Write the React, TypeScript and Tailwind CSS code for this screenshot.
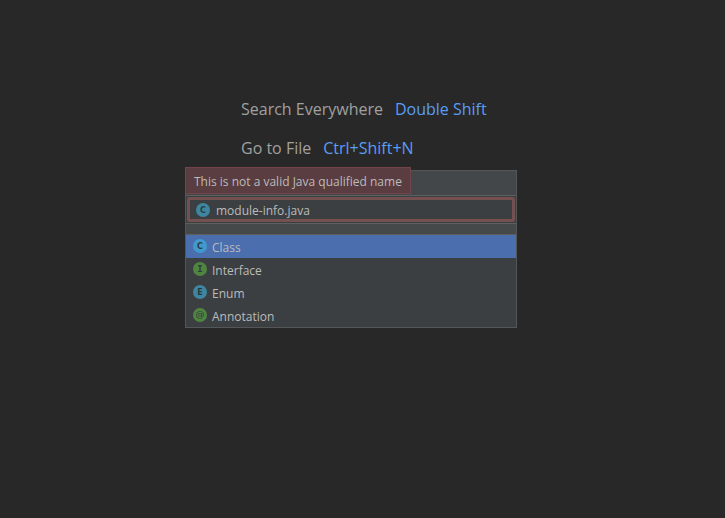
import React, { useState } from 'react';

interface Kind {
  name: string;
  letter: string;
  fill: string;
}

const kinds: Kind[] = [
  { name: 'Class', letter: 'C', fill: '#3e86a0' },
  { name: 'Interface', letter: 'I', fill: '#50853f' },
  { name: 'Enum', letter: 'E', fill: '#3e86a0' },
  { name: 'Annotation', letter: '@', fill: '#50853f' },
];

const tips = [
  { label: 'Search Everywhere', shortcut: 'Double Shift' },
  { label: 'Go to File', shortcut: 'Ctrl+Shift+N' },
];

// "I" needs the mono face for its serifs
const letterStyles: Record<string, string> = {
  C: "font-['DejaVu_Sans',sans-serif] text-[8px] font-bold",
  I: "font-['DejaVu_Sans_Mono',monospace] text-[9px] font-bold",
  E: "font-['DejaVu_Sans',sans-serif] text-[8px] font-bold",
  '@': "font-['DejaVu_Sans',sans-serif] text-[9px]",
};

export default function App() {
  const [fileName, setFileName] = useState('module-info.java');
  const [selected, setSelected] = useState('Class');

  return (
    <main className="min-h-screen bg-[#282828] pt-[90px] pl-[185px] font-['Open_Sans','Noto_Sans',sans-serif]">
      <div className="pl-14">
        {tips.map((tip) => (
          <p key={tip.label} className="flex gap-3 text-[16px] leading-[39px] text-[#a0a0a0]">
            <span>{tip.label}</span>
            <span className="text-[#589df6]">{tip.shortcut}</span>
          </p>
        ))}
      </div>

      {/* New file popup */}
      <form
        className="relative mt-[2px] w-full max-w-[332px] border border-[#555657] bg-[#3c3f41] text-[12px] text-[#bbbbbb]"
        onSubmit={(e) => e.preventDefault()}
      >
        <div className="h-6 bg-[#434749]" />
        <div
          id="name-error"
          role="alert"
          className="absolute -top-1 -left-px border border-[#73454b] bg-[#593d41] px-2 pt-[2px] leading-[23px] whitespace-nowrap"
        >
          This is not a valid Java qualified name
        </div>

        <div className="border-y border-[#5e6060] p-px">
          <label className="flex items-center gap-[6px] rounded-[2px] border-3 border-[#745050] px-[6px]">
            <KindIcon letter="C" fill="#3e86a0" />
            <input
              type="text"
              aria-label="Name"
              aria-invalid="true"
              aria-describedby="name-error"
              value={fileName}
              onChange={(e) => setFileName(e.target.value)}
              className="h-[19px] min-w-0 flex-1 bg-transparent pt-[2px] outline-none"
            />
          </label>
        </div>

        <div className="h-[11px] border-b border-[#5e6060] bg-[#45494a]" />

        <div role="listbox" aria-label="Kind">
          {kinds.map((kind) => (
            <button
              key={kind.name}
              type="button"
              role="option"
              aria-selected={kind.name === selected}
              onClick={() => setSelected(kind.name)}
              className={`flex h-[23px] w-full items-start gap-[5px] px-[7px] pt-1 text-left leading-[18px] ${
                kind.name === selected ? 'bg-[#4b6eaf]' : ''
              }`}
            >
              <KindIcon
                letter={kind.letter}
                fill={kind.name === selected ? '#409ace' : kind.fill}
              />
              {kind.name}
            </button>
          ))}
        </div>
      </form>
    </main>
  );
}

function KindIcon({ letter, fill }: { letter: string; fill: string }) {
  return (
    <svg width="14" height="14" viewBox="0 0 14 14" className="shrink-0" aria-hidden="true">
      <circle cx="7" cy="7" r="7" fill={fill} />
      <text
        x="7"
        y={letter === '@' ? 9 : 10}
        textAnchor="middle"
        fill="#2b3a40"
        className={letterStyles[letter]}
      >
        {letter}
      </text>
    </svg>
  );
}
